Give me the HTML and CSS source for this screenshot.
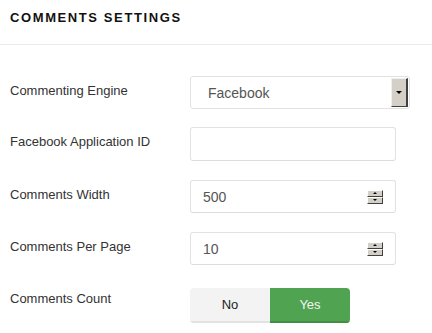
FILE: index.html
```html
<!DOCTYPE html>
<html>
<head>
<meta charset="utf-8">
<link rel="stylesheet" href="styles.css">
</head>
<body>
<div class="panel">
  <div class="panel-header">
    <h3 class="panel-title">COMMENTS SETTINGS</h3>
  </div>
  <div class="form">
    <div class="row row-select">
      <label class="label">Commenting Engine</label>
      <div class="select">
        <span class="select-value">Facebook</span>
        <span class="select-btn"><span class="tri-down"></span></span>
      </div>
    </div>
    <div class="row row-text">
      <label class="label">Facebook Application ID</label>
      <div class="input"></div>
    </div>
    <div class="row row-num">
      <label class="label">Comments Width</label>
      <div class="input num">
        <span class="num-value">500</span>
        <span class="spin"><span class="spin-btn"><span class="tri-up small"></span></span><span class="spin-btn"><span class="tri-down small"></span></span></span>
      </div>
    </div>
    <div class="row row-num2">
      <label class="label">Comments Per Page</label>
      <div class="input num">
        <span class="num-value">10</span>
        <span class="spin"><span class="spin-btn"><span class="tri-up small"></span></span><span class="spin-btn"><span class="tri-down small"></span></span></span>
      </div>
    </div>
    <div class="row row-toggle">
      <label class="label label-toggle">Comments Count</label>
      <div class="toggle">
        <span class="toggle-btn off">No</span>
        <span class="toggle-btn on">Yes</span>
      </div>
    </div>
  </div>
</div>
</body>
</html>
```
FILE: styles.css
```css
html, body {
  margin: 0;
  padding: 0;
  background: #fff;
}
body {
  font-family: "Liberation Sans", Arial, sans-serif;
  font-size: 13px;
  color: #333;
}
.panel-header {
  height: 44px;
  border-bottom: 1px solid #eaeaea;
  box-sizing: content-box;
}
.panel-title {
  margin: 0;
  padding: 10px 0 0 10px;
  font-size: 13px;
  line-height: 15px;
  font-weight: bold;
  letter-spacing: 1.6px;
  color: #111;
}
.form {
  padding: 31px 0 0 10px;
}
.row {
  display: flex;
  align-items: flex-start;
}
.label {
  width: 180px;
  padding-top: 7px;
  line-height: 15px;
  color: #333;
}
.label-toggle {
  padding-top: 3px;
}
.row-select { margin-bottom: 18px; }
.row-text { margin-bottom: 19px; }
.row-num { margin-bottom: 19px; }
.row-num2 { margin-bottom: 23px; }

.select {
  width: 220px;
  height: 33px;
  box-sizing: border-box;
  border: 1px solid #e2e2e2;
  border-radius: 3px;
  display: flex;
  align-items: center;
  justify-content: space-between;
  padding: 0 0 0 17px;
  background: #fff;
}
.select-value {
  font-size: 14px;
  color: #555;
}
.select-btn {
  width: 17px;
  height: 29px;
  box-sizing: border-box;
  background: #d4d0c8;
  border-top: 1px solid #f0efec;
  border-left: 1px solid #f0efec;
  border-right: 2px solid #404040;
  border-bottom: 1px solid #404040;
  display: flex;
  align-items: center;
  justify-content: center;
  margin-right: 1px;
}
.tri-down {
  width: 0;
  height: 0;
  border-left: 3px solid transparent;
  border-right: 3px solid transparent;
  border-top: 3px solid #000;
}
.tri-up {
  width: 0;
  height: 0;
  border-left: 3px solid transparent;
  border-right: 3px solid transparent;
  border-bottom: 3px solid #000;
}
.tri-down.small, .tri-up.small {
  border-left-width: 2px;
  border-right-width: 2px;
  border-top-width: 2px;
  border-bottom-width: 2px;
}
.tri-up.small { border-top: 0; }
.tri-down.small { border-bottom: 0; }

.input {
  width: 206px;
  height: 34px;
  box-sizing: border-box;
  border: 1px solid #e2e2e2;
  border-bottom-color: #dcdcdc;
  border-radius: 3px;
  background: #fff;
}
.row-num .input, .row-num2 .input { height: 33px; }
.num {
  display: flex;
  align-items: center;
  justify-content: space-between;
  padding: 0 12px 0 12px;
}
.num-value {
  font-size: 14px;
  color: #555;
}
.spin {
  display: flex;
  flex-direction: column;
  width: 16px;
  height: 14px;
}
.spin-btn {
  flex: 1;
  box-sizing: border-box;
  background: #d4d0c8;
  border-top: 1px solid #fff;
  border-left: 1px solid #fff;
  border-right: 1px solid #404040;
  border-bottom: 1px solid #404040;
  display: flex;
  align-items: center;
  justify-content: center;
}

.toggle {
  display: flex;
  height: 35px;
  border-radius: 4px;
  overflow: hidden;
}
.toggle-btn {
  width: 80px;
  display: flex;
  align-items: center;
  justify-content: center;
  font-size: 13px;
  box-sizing: border-box;
  padding-bottom: 2px;
}
.toggle-btn.off {
  background: #f3f3f3;
  color: #222;
  box-shadow: inset 0 -2px 0 #e2e2e2;
}
.toggle-btn.on {
  background: #50a350;
  color: #f4f4f4;
  box-shadow: inset 0 -2px 0 #428e42;
}
```
